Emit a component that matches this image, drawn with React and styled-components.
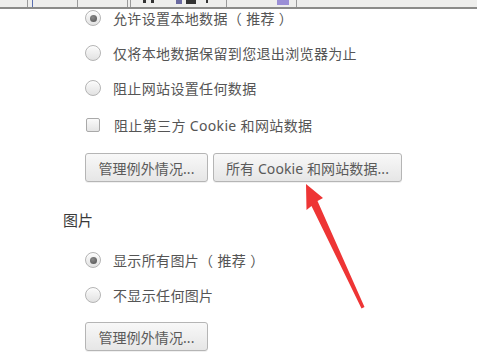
import styled, { createGlobalStyle } from "styled-components";

const GlobalStyle = createGlobalStyle`
  html, body {
    margin: 0;
    padding: 0;
    background: #ffffff;
  }
  body {
    font-family: "Noto Sans", "Noto Sans CJK SC", sans-serif;
    color: #4a4a4a;
  }
`;

const Page = styled.div`
  position: relative;
  width: 477px;
  height: 363px;
  overflow: hidden;
  background: #ffffff;
`;

// 顶部被截掉的工具栏
const TopStrip = styled.div`
  height: 7px;
  background: #eeeeec;
  border-bottom: 2px solid #8b8b89;
  display: flex;
  align-items: stretch;
`;

const StripMark = styled.div`
  width: ${(p) => p.w || 1}px;
  margin-left: ${(p) => p.left}px;
  background: ${(p) => p.color || "#9a9a9a"};
  height: ${(p) => p.h || 7}px;
`;

const Content = styled.div`
  display: flex;
  flex-direction: column;
  padding-left: 85px;
`;

const Group = styled.div`
  display: flex;
  flex-direction: column;
  gap: 17px;
  margin-top: ${(p) => p.top || 0}px;
`;

const Row = styled.label`
  display: flex;
  align-items: center;
  height: 18px;
  gap: ${(p) => (p.check ? 14 : 12)}px;
  margin-top: ${(p) => p.top || 0}px;
  font-size: 14px;
  letter-spacing: 0.35px;
  color: #555555;
  white-space: nowrap;
`;

const Radio = styled.span`
  box-sizing: border-box;
  width: 16px;
  height: 16px;
  border-radius: 50%;
  border: 1px solid #b4b4b4;
  background: linear-gradient(#fbfbfb, #e2e2e2);
  box-shadow: inset 0 1px 1px rgba(255, 255, 255, 0.8);
  display: flex;
  align-items: center;
  justify-content: center;
  flex: none;

  &::after {
    content: "";
    display: ${(p) => (p.checked ? "block" : "none")};
    width: 7px;
    height: 7px;
    border-radius: 50%;
    background: radial-gradient(circle at 40% 35%, #8a8a8a, #505050);
  }
`;

const Check = styled.span`
  box-sizing: border-box;
  width: 14px;
  height: 14px;
  margin-left: 1px;
  border-radius: 2px;
  border: 1px solid #a9a9a9;
  background: linear-gradient(#fafafa, #e4e4e4);
  flex: none;
`;

const ButtonRow = styled.div`
  display: flex;
  gap: 5px;
  margin-top: ${(p) => p.top || 0}px;
`;

const Button = styled.button`
  box-sizing: border-box;
  height: 29px;
  width: ${(p) => p.w}px;
  padding: 0;
  border: 1px solid #b5b5b5;
  border-radius: 3px;
  background: linear-gradient(#f8f8f8, #e6e6e6);
  box-shadow: 0 1px 0 rgba(0, 0, 0, 0.06);
  font-family: "Noto Sans", "Noto Sans CJK SC", sans-serif;
  font-size: 14px;
  letter-spacing: 0.1px;
  color: #5a5a5a;
  text-align: center;
`;

const Heading = styled.div`
  margin-top: 30px;
  margin-left: -22px;
  height: 16px;
  line-height: 16px;
  font-size: 15px;
  color: #3a3a3a;
`;

const Arrow = styled.svg`
  position: absolute;
  left: 0;
  top: 0;
  pointer-events: none;
`;

const App = () => {
  return (
    <Page>
      <GlobalStyle />
      <TopStrip>
        <StripMark left={27} />
        <StripMark left={4} color="#5a6fb0" />
        <StripMark left={44} />
        <StripMark left={49} />
        <StripMark left={2} />
        <StripMark left={12} w={3} h={3} color="#333" />
        <StripMark left={5} w={3} h={3} color="#333" />
        <StripMark left={22} w={6} h={4} color="#6a6aa0" />
        <StripMark left={4} w={10} h={4} color="#333" />
        <StripMark left={10} w={2} h={3} color="#333" />
        <StripMark left={18} />
        <StripMark left={50} w={12} h={5} color="#9b8fd6" />
        <StripMark left={7} />
      </TopStrip>

      <Content>
        <Group>
          <Row>
            <Radio checked />
            允许设置本地数据（ 推荐 ）
          </Row>
          <Row>
            <Radio />
            仅将本地数据保留到您退出浏览器为止
          </Row>
          <Row>
            <Radio />
            阻止网站设置任何数据
          </Row>
          <Row check top={2}>
            <Check />
            阻止第三方 Cookie 和网站数据
          </Row>
        </Group>

        <ButtonRow top={19}>
          <Button w={123}>管理例外情况...</Button>
          <Button w={189}>所有 Cookie 和网站数据...</Button>
        </ButtonRow>

        <Heading>图片</Heading>

        <Group top={23}>
          <Row>
            <Radio checked />
            显示所有图片（ 推荐 ）
          </Row>
          <Row>
            <Radio />
            不显示任何图片
          </Row>
        </Group>

        <ButtonRow top={18}>
          <Button w={123}>管理例外情况...</Button>
        </ButtonRow>
      </Content>

      <Arrow width="477" height="363" viewBox="0 0 477 363">
        <path
          d="M306,184 L323,198 L317.5,201 L364.5,307 L361.5,308.5 L311.5,206 L306.5,210 Z"
          fill="#ee3535"
        />
      </Arrow>
    </Page>
  );
};

export default App;
